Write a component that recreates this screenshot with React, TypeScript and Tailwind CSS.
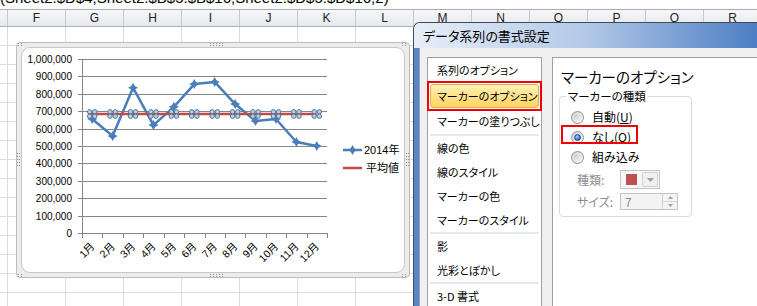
import React from "react";

const COLS = ["", "F", "G", "H", "I", "J", "K", "L", "M", "N", "O", "P", "Q", "R"];
const VALUES = [655000, 557000, 835000, 620000, 725000, 856000, 868000, 741000, 644000, 655000, 523000, 500000];
const AVG = 684000;

// chart coords, origin at the chart frame's padding box (page 17,43)
const AX = 65;
const AR = 310;
const Y0 = 190;
const H = 174;
const CW = (AR - AX) / 12;
const cx = (i: number) => AX + CW * (i + 0.5);
const cy = (v: number) => Y0 - (v / 1000000) * H;

function star(x: number, y: number, r = 5, k = 1.8) {
  return `M${x} ${y - r}L${x + k} ${y - k}L${x + r} ${y}L${x + k} ${y + k}L${x} ${y + r}L${x - k} ${y + k}L${x - r} ${y}L${x - k} ${y - k}Z`;
}

function Dots({ x, y, n, vertical }: { x: number; y: number; n: number; vertical?: boolean }) {
  const out = [];
  for (let i = 0; i < n; i++) {
    for (let j = 0; j < 2; j++) {
      out.push(
        <rect
          key={`${i}-${j}`}
          x={vertical ? x + j * 2 : x + i * 3}
          y={vertical ? y + i * 3 : y + j * 2}
          width={1}
          height={1}
          fill="#8f8f8f"
        />
      );
    }
  }
  return <g>{out}</g>;
}

function SelMark({ x, y }: { x: number; y: number }) {
  return (
    <g fill="#b7cfe2" stroke="#4b6b8c" strokeWidth={0.9}>
      <circle cx={x - 2.6} cy={y - 2.2} r={2.2} />
      <circle cx={x + 2.6} cy={y - 2.2} r={2.2} />
      <circle cx={x - 2.6} cy={y + 2.2} r={2.2} />
      <circle cx={x + 2.6} cy={y + 2.2} r={2.2} />
    </g>
  );
}

function ChartObject() {
  const grid = [1, 2, 3, 4, 5, 6, 7, 8, 9, 10];
  const pts = VALUES.map((v, i) => `${cx(i)},${cy(v)}`).join(" ");
  const avgY = cy(AVG);

  return (
    <div className="absolute left-[16px] top-[42px] h-[236px] w-[394px] rounded-[4px] border border-[#bcbcbc] bg-[#ececec] p-[4px]">
      <div className="h-full w-full rounded-[9px] border border-[#c6c6c6] bg-white" />
      <svg width={392} height={234} className="absolute left-0 top-0" fontFamily="'Liberation Sans','Noto Sans CJK JP',sans-serif">
        <Dots x={1} y={0} n={2} />
        <Dots x={385} y={0} n={2} />
        <Dots x={1} y={231} n={2} />
        <Dots x={385} y={231} n={2} />
        <Dots x={193} y={0} n={5} />
        <Dots x={193} y={231} n={5} />
        <Dots x={0} y={110} n={5} vertical />
        <Dots x={389} y={110} n={5} vertical />

        {grid.map((k) => {
          const y = Math.round(cy(k * 100000)) + 0.5;
          return <line key={k} x1={AX - 4} x2={AR} y1={y} y2={y} stroke="#868686" />;
        })}
        {[0, ...grid].map((k) => {
          const y = Math.round(cy(k * 100000)) + 0.5;
          return (
            <text key={k} x={55} y={y + 3.5} fontSize={10} textAnchor="end" fill="#000">
              {(k * 100000).toLocaleString("en-US")}
            </text>
          );
        })}
        <line x1={AX + 0.5} x2={AX + 0.5} y1={Math.round(cy(1000000))} y2={Y0 + 0.5} stroke="#868686" />
        <line x1={AX - 4} x2={AR} y1={Y0 + 0.5} y2={Y0 + 0.5} stroke="#868686" />
        {Array.from({ length: 13 }, (_, k) => {
          const x = Math.round(AX + CW * k) + 0.5;
          return <line key={k} x1={x} x2={x} y1={Y0} y2={Y0 + 5} stroke="#868686" />;
        })}
        {VALUES.map((_, i) => (
          <text
            key={i}
            x={cx(i) + 3}
            y={204}
            fontSize={10.5}
            textAnchor="end"
            transform={`rotate(-45 ${cx(i) + 3} 204)`}
          >
            {i + 1}月
          </text>
        ))}

        <polyline points={pts} fill="none" stroke="#4a7ebb" strokeWidth={2.5} strokeLinejoin="round" />
        {VALUES.map((v, i) => (
          <path key={i} d={star(cx(i), cy(v))} fill="#4a7ebb" />
        ))}
        <line x1={cx(0) - 4} x2={cx(11)} y1={avgY} y2={avgY} stroke="#be4b48" strokeWidth={2.5} />
        {VALUES.map((_, i) => (
          <SelMark key={i} x={cx(i)} y={avgY} />
        ))}

        <line x1={326} x2={345} y1={107} y2={107} stroke="#4a7ebb" strokeWidth={2.5} />
        <path d={star(335.5, 107)} fill="#4a7ebb" />
        <text x={347} y={111} fontSize={11}>2014年</text>
        <line x1={326} x2={345} y1={125} y2={125} stroke="#be4b48" strokeWidth={2.5} />
        <text x={349} y={129} fontSize={11}>平均値</text>
      </svg>
    </div>
  );
}

function Radio({ checked }: { checked?: boolean }) {
  return (
    <span className="flex h-[13px] w-[13px] shrink-0 items-center justify-center rounded-full border border-[#8e8f8f] bg-linear-to-br from-[#d4d4d4] to-[#fbfbfb]">
      {checked ? (
        <span className="h-[7px] w-[7px] rounded-full border border-[#1d4f93] bg-[radial-gradient(circle_at_40%_35%,#a9d6ff,#1c62c0_75%)]" />
      ) : (
        <span className="h-[7px] w-[7px] rounded-full bg-linear-to-br from-[#c9c9c9] to-[#f4f4f4]" />
      )}
    </span>
  );
}

function Item({ children, h = "h-[24px]" }: { children: React.ReactNode; h?: string }) {
  return <div className={`${h} flex items-center whitespace-nowrap pl-[9px]`}>{children}</div>;
}

function Sep() {
  return <div className="mx-[2px] h-[2px] bg-[#e4e9ef]" />;
}

function ListBox() {
  return (
    <div className="w-[115px] shrink-0 border border-b-0 border-[#a0a0a0] bg-white text-[11px]">
      <Item h="h-[25px]">系列のオプション</Item>
      <div className="h-[26px] px-[2px] py-[1px]">
        <div className="relative flex h-full items-center whitespace-nowrap rounded-[3px] border border-[#d4b25c] bg-linear-to-b from-[#fff0b3] to-[#ffd35e] pl-[6px]">
          マーカーのオプション
          <div className="absolute -bottom-[4px] -left-[4px] -right-[4px] -top-[4px] border-2 border-[#f20000]" />
        </div>
      </div>
      <Item h="h-[25px]">マーカーの塗りつぶし</Item>
      <Sep />
      <Item>線の色</Item>
      <Item>線のスタイル</Item>
      <Item>マーカーの色</Item>
      <Item>マーカーのスタイル</Item>
      <Sep />
      <Item>影</Item>
      <Item>光彩とぼかし</Item>
      <Sep />
      <Item>3-D 書式</Item>
    </div>
  );
}

function RightPanel() {
  return (
    <div className="flex-1 whitespace-nowrap border-l border-t border-[#a0a0a0] bg-white pl-[6px]">
      <div className="mt-[9px] h-[20px] pl-[2px] text-[14.5px] leading-[20px]">マーカーのオプション</div>
      <div className="relative mt-[9px] w-[133px] rounded-[4px] border border-[#d3dde5] pb-[6px] pt-[10px] text-[12px]">
        <div className="absolute -top-[9px] left-[6px] bg-white px-[2px] text-[11.5px] leading-[16px]">マーカーの種類</div>
        <div className="flex h-[20px] items-center gap-[8px] pl-[11px]">
          <Radio />
          <span>
            自動(<span className="underline">U</span>)
          </span>
        </div>
        <div className="relative flex h-[20px] items-center gap-[8px] pl-[11px]">
          <Radio checked />
          <span>
            なし(<span className="underline">O</span>)
          </span>
          <div className="absolute left-[1px] top-[-2px] h-[19px] w-[77px] border-2 border-[#f20000]" />
        </div>
        <div className="flex h-[20px] items-center gap-[8px] pl-[11px]">
          <Radio />
          <span>組み込み</span>
        </div>
        <div className="mt-[3px] flex h-[19px] items-center pl-[17px] text-[#8c8c8c]">
          <span className="w-[43px]">種類:</span>
          <div className="flex h-[19px] w-[40px] border border-[#c4c4c4] bg-[#f7f7f7]">
            <div className="flex w-[20px] items-center justify-center">
              <div className="h-[11px] w-[11px] bg-[#c0504d]" />
            </div>
            <div className="m-[1px] flex flex-1 items-center justify-center rounded-[2px] border border-[#d0d0d0] bg-[#f0f0f0]">
              <svg width="7" height="4" viewBox="0 0 7 4">
                <path d="M0 0H7L3.5 4Z" fill="#a0a0a0" />
              </svg>
            </div>
          </div>
        </div>
        <div className="mt-[4px] flex h-[17px] items-center pl-[17px] text-[#8c8c8c]">
          <span className="w-[43px]">サイズ:</span>
          <div className="flex h-[17px] w-[58px] border border-[#c4c4c4] bg-[#f4f4f4]">
            <div className="flex-1 pl-[4px] leading-[15px]">7</div>
            <div className="flex w-[15px] flex-col border-l border-[#d0d0d0]">
              <div className="flex flex-1 items-center justify-center border-b border-[#d8d8d8]">
                <svg width="5" height="3" viewBox="0 0 5 3">
                  <path d="M0 3H5L2.5 0Z" fill="#a0a0a0" />
                </svg>
              </div>
              <div className="flex flex-1 items-center justify-center">
                <svg width="5" height="3" viewBox="0 0 5 3">
                  <path d="M0 0H5L2.5 3Z" fill="#a0a0a0" />
                </svg>
              </div>
            </div>
          </div>
        </div>
      </div>
    </div>
  );
}

function FormatDialog() {
  return (
    <div className="absolute bottom-0 left-[413px] right-0 top-[22px] flex flex-col overflow-hidden rounded-tl-[7px] border-l border-t border-[#404b5a] font-['Noto_Sans_CJK_JP',sans-serif] [font-feature-settings:'palt']">
      <div className="flex h-[25px] shrink-0 items-center whitespace-nowrap bg-linear-to-r from-[#e7eef8] via-[#b3c9e7] to-[#4c7ec3] pl-[9px] text-[13px]">
        データ系列の書式設定
      </div>
      <div className="flex min-h-0 flex-1">
        <div className="w-[6px] shrink-0 border-r border-[#8ea2bd] bg-[#5a86c4]" />
        <div className="flex flex-1 gap-[10px] bg-[#f0f0f0] pl-[7px] pt-[9px]">
          <ListBox />
          <RightPanel />
        </div>
      </div>
    </div>
  );
}

export default function App() {
  return (
    <div className="relative h-[306px] w-[757px] overflow-hidden bg-white font-['Liberation_Sans','Noto_Sans_CJK_JP',sans-serif] text-black">
      <div className="h-[10px] overflow-hidden whitespace-nowrap border-b border-[#a7adb5]">
        <div className="-mt-[11px] text-[15px] leading-[17px]">(Sheet2!$D$4,Sheet2!$B$5:$B$16,Sheet2!$D$5:$D$16,2)</div>
      </div>
      <div className="flex h-[17px] border-b border-[#aab0b8] bg-linear-to-b from-[#f6f7f9] to-[#e6e9ed] text-[12px] text-[#222]">
        {COLS.map((c, i) => (
          <div
            key={i}
            className={`${i === 0 ? "w-[8px]" : "w-[58px]"} flex shrink-0 items-center justify-center border-r border-[#c5cad1]`}
          >
            {c}
          </div>
        ))}
      </div>
      {Array.from({ length: 15 }, (_, r) => (
        <div key={r} className="flex h-[19px] border-b border-[#dadcdd]">
          {COLS.map((_, i) => (
            <div key={i} className={`${i === 0 ? "w-[8px]" : "w-[58px]"} shrink-0 border-r border-[#dadcdd]`} />
          ))}
        </div>
      ))}
      <ChartObject />
      <FormatDialog />
    </div>
  );
}
